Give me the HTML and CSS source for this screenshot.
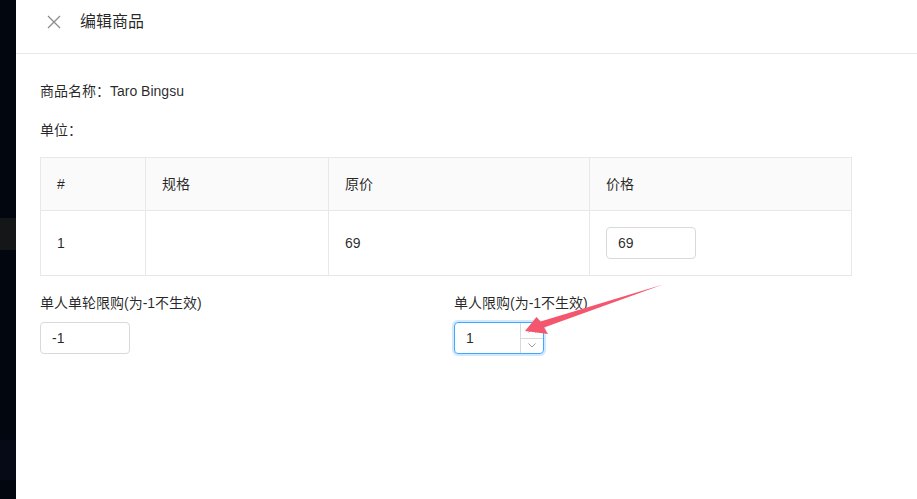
FILE: index.html
```html
<!DOCTYPE html>
<html lang="zh-CN">
<head>
    <meta charset="UTF-8">
    <meta name="viewport" content="width=device-width, initial-scale=1.0">
    <title>编辑商品</title>
    <link rel="stylesheet" href="styles.css">
</head>
<body>
    <div class="page">
        <aside class="sider">
            <div class="sider-item hover"></div>
            <div class="sider-item selected"></div>
        </aside>

        <div class="drawer">
            <div class="drawer-header">
                <span class="drawer-close">
                    <svg width="14" height="14" viewBox="0 0 14 14">
                        <path d="M1 1 L13 13 M13 1 L1 13" stroke="#8c8c8c" stroke-width="1.3" fill="none"/>
                    </svg>
                </span>
                <span class="drawer-title">编辑商品</span>
            </div>

            <div class="drawer-body">
                <div class="field-line">商品名称：Taro Bingsu</div>
                <div class="field-line">单位：</div>

                <table class="spec-table">
                    <colgroup>
                        <col class="col-index">
                        <col class="col-spec">
                        <col class="col-origin">
                        <col>
                    </colgroup>
                    <thead>
                        <tr>
                            <th>#</th>
                            <th>规格</th>
                            <th>原价</th>
                            <th>价格</th>
                        </tr>
                    </thead>
                    <tbody>
                        <tr>
                            <td>1</td>
                            <td></td>
                            <td>69</td>
                            <td><input class="text-input" type="text" value="69"></td>
                        </tr>
                    </tbody>
                </table>

                <div class="limit-row">
                    <div class="limit-item">
                        <label class="limit-label">单人单轮限购(为-1不生效)</label>
                        <input class="text-input" type="text" value="-1">
                    </div>
                    <div class="limit-item">
                        <label class="limit-label">单人限购(为-1不生效)</label>
                        <div class="number-input focused">
                            <input type="text" value="1">
                            <div class="number-handler">
                                <span class="handler-up">
                                    <svg width="8" height="5" viewBox="0 0 8 5"><path d="M0.5 4.5 L4 1 L7.5 4.5" stroke="#999" fill="none"/></svg>
                                </span>
                                <span class="handler-down">
                                    <svg width="8" height="5" viewBox="0 0 8 5"><path d="M0.5 0.5 L4 4 L7.5 0.5" stroke="#999" fill="none"/></svg>
                                </span>
                            </div>
                        </div>
                    </div>
                </div>
            </div>
        </div>

        <!-- screenshot annotation -->
        <svg class="annotation" width="917" height="499" viewBox="0 0 917 499">
            <polygon points="525,331 536.5,317 540.5,321.5 663,284.5 544,327.5 548,334" fill="#f4566d"/>
        </svg>
    </div>
</body>
</html>
```

FILE: styles.css
```css
html, body {
    margin: 0;
    padding: 0;
    background-color: #fff;
}
body {
    font-family: "Liberation Sans", "Noto Sans CJK SC", sans-serif;
    font-size: 14px;
    color: rgba(0, 0, 0, 0.85);
}
.page {
    position: relative;
    display: flex;
    width: 917px;
    height: 499px;
    overflow: hidden;
}
.sider {
    width: 16px;
    flex-shrink: 0;
    background-color: #02070f;
    padding-top: 218px;
    box-sizing: border-box;
}
.sider-item.hover {
    height: 32px;
    background-color: #151617;
}
.sider-item.selected {
    height: 40px;
    margin-top: 190px;
    background-color: #060a16;
}
.drawer {
    flex: 1;
    background-color: #fff;
}
.drawer-header {
    display: flex;
    align-items: center;
    height: 53px;
    padding-left: 31px;
    border-bottom: 1px solid #e8e8e8;
}
.drawer-close {
    display: flex;
    width: 14px;
    height: 14px;
    margin-top: -10px;
}
.drawer-title {
    margin-left: 19px;
    margin-top: -10px;
    font-size: 16px;
    line-height: 22px;
    color: rgba(0, 0, 0, 0.85);
}
.drawer-body {
    padding: 26px 24px 0;
}
.field-line {
    line-height: 22px;
    margin-bottom: 17px;
}
.field-line:nth-child(2) {
    margin-bottom: 16px;
}
.spec-table {
    width: 812px;
    border-collapse: collapse;
    table-layout: fixed;
    border: 1px solid #e8e8e8;
}
.col-index {
    width: 105px;
}
.col-spec {
    width: 183px;
}
.col-origin {
    width: 261px;
}
.spec-table th,
.spec-table td {
    border: 1px solid #e8e8e8;
    text-align: left;
    line-height: 22px;
    font-weight: normal;
}
.spec-table th {
    background-color: #fafafa;
    padding: 15px 16px;
}
.spec-table td {
    height: 32px;
    padding: 16px;
}
.text-input {
    display: block;
    width: 90px;
    height: 32px;
    box-sizing: border-box;
    padding: 4px 11px;
    border: 1px solid #d9d9d9;
    border-radius: 4px;
    font-family: inherit;
    font-size: 14px;
    color: rgba(0, 0, 0, 0.85);
    outline: none;
}
.limit-row {
    display: grid;
    grid-template-columns: 414px 1fr;
    margin-top: 16px;
}
.limit-label {
    display: block;
    line-height: 22px;
    margin-bottom: 8px;
}
.number-input {
    display: flex;
    width: 90px;
    height: 32px;
    box-sizing: border-box;
    border: 1px solid #d9d9d9;
    border-radius: 4px;
    overflow: hidden;
}
.number-input.focused {
    border-color: #40a9ff;
    box-shadow: 0 0 0 2px rgba(24, 144, 255, 0.2);
}
.number-input input {
    flex: 1;
    min-width: 0;
    border: none;
    outline: none;
    padding: 0 11px;
    font-family: inherit;
    font-size: 14px;
    color: rgba(0, 0, 0, 0.85);
    background: transparent;
}
.number-handler {
    display: flex;
    flex-direction: column;
    width: 22px;
    border-left: 1px solid #d9d9d9;
}
.number-handler span {
    flex: 1;
    display: flex;
    align-items: center;
    justify-content: center;
}
.handler-down {
    border-top: 1px solid #d9d9d9;
}
.annotation {
    position: absolute;
    left: 0;
    top: 0;
    pointer-events: none;
}
```
